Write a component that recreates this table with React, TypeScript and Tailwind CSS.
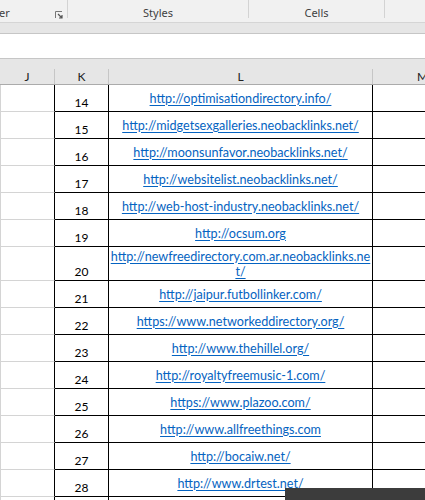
const rows: { n: number; url: string; tall?: boolean }[] = [
  { n: 14, url: "http://optimisationdirectory.info/" },
  { n: 15, url: "http://midgetsexgalleries.neobacklinks.net/" },
  { n: 16, url: "http://moonsunfavor.neobacklinks.net/" },
  { n: 17, url: "http://websitelist.neobacklinks.net/" },
  { n: 18, url: "http://web-host-industry.neobacklinks.net/" },
  { n: 19, url: "http://ocsum.org" },
  { n: 20, url: "http://newfreedirectory.com.ar.neobacklinks.net/", tall: true },
  { n: 21, url: "http://jaipur.futbollinker.com/" },
  { n: 22, url: "https://www.networkeddirectory.org/" },
  { n: 23, url: "http://www.thehillel.org/" },
  { n: 24, url: "http://royaltyfreemusic-1.com/" },
  { n: 25, url: "https://www.plazoo.com/" },
  { n: 26, url: "http://www.allfreethings.com" },
  { n: 27, url: "http://bocaiw.net/" },
  { n: 28, url: "http://www.drtest.net/" },
];

const cellFont = { fontFamily: "Lato, 'Open Sans', sans-serif" };

function Launcher() {
  return (
    <svg width="8" height="8" viewBox="0 0 8 8" className="mt-[2px]">
      <path d="M0.5 7V0.5H7" fill="none" stroke="#777" strokeWidth="1" />
      <path d="M3 3L7 7M7 4V7H4" fill="none" stroke="#555" strokeWidth="1.2" />
    </svg>
  );
}

function HeaderCell({ label, w }: { label: string; w: string }) {
  return (
    <div className={`flex h-full shrink-0 ${w}`}>
      <div className="flex-1 pt-[11px] text-center text-[12px] leading-[14px] text-[#222]">{label}</div>
      <div className="h-[15px] w-px self-end bg-[#c6c6c6]" />
    </div>
  );
}

export default function App() {
  return (
    <div
      className="relative h-[500px] w-[425px] overflow-hidden bg-white"
      style={{ fontFamily: "'Noto Sans', 'Open Sans', sans-serif" }}
    >
      {/* ribbon group labels */}
      <div className="flex h-[23px] border-b border-[#d5d5d5] bg-[#f1f1f1] text-[11px] text-[#3f3f3f]">
        <div className="flex w-[67px] shrink-0 items-center justify-between pr-[4px] pt-[5px]">
          <span className="-ml-px">er</span>
          <Launcher />
        </div>
        <div className="h-[18px] w-px shrink-0 bg-[#d3d3d3]" />
        <div className="flex w-[180px] shrink-0 items-center justify-center pt-[5px]">Styles</div>
        <div className="h-[18px] w-px shrink-0 bg-[#d3d3d3]" />
        <div className="flex w-[135px] shrink-0 items-center justify-center pt-[5px]">Cells</div>
        <div className="h-[18px] w-px shrink-0 bg-[#d3d3d3]" />
      </div>
      <div className="h-[11px] border-b border-[#c6c6c6] bg-[#e6e6e6]" />
      <div className="h-[25px] border-b border-[#c6c6c6] bg-white" />

      {/* column headers */}
      <div className="flex h-[26px] border-b border-[#ababab] bg-[#e6e6e6]" style={cellFont}>
        <HeaderCell label="J" w="w-[55px]" />
        <HeaderCell label="K" w="w-[54px]" />
        <HeaderCell label="L" w="w-[264px]" />
        <HeaderCell label="M" w="w-[100px]" />
      </div>

      {/* sheet rows */}
      <div style={cellFont}>
        {rows.map((r) => (
          <div key={r.n} className={`flex ${r.tall ? "h-[34px]" : "h-[27px]"}`}>
            <div className="w-[55px] shrink-0 border-b border-l border-r border-b-[#d4d4d4] border-l-[#d4d4d4] border-r-black" />
            <div className="flex w-[54px] shrink-0 items-end justify-center border-b border-r border-black pb-[1px] text-[12px] leading-[14px] text-black">
              {r.n}
            </div>
            <div className="flex w-[264px] shrink-0 items-center justify-center overflow-hidden border-b border-r border-black text-center text-[12.6px] leading-[15px]">
              <a className="whitespace-nowrap text-[#0563c1] underline underline-offset-[2px]">
                {r.tall ? (
                  <>
                    http://newfreedirectory.com.ar.neobacklinks.ne
                    <br />
                    t/
                  </>
                ) : (
                  r.url
                )}
              </a>
            </div>
            <div className="w-[100px] shrink-0 border-b border-black" />
          </div>
        ))}
        <div className="flex h-[10px]">
          <div className="w-[55px] shrink-0 border-l border-r border-l-[#d4d4d4] border-r-black" />
          <div className="w-[54px] shrink-0 border-r border-black" />
          <div className="w-[264px] shrink-0 border-r border-black" />
        </div>
      </div>

      {/* dark overlay at bottom right */}
      <div className="absolute left-[285px] top-[488px] h-[12px] w-[140px] bg-[#3c3c3c]" />
    </div>
  );
}
